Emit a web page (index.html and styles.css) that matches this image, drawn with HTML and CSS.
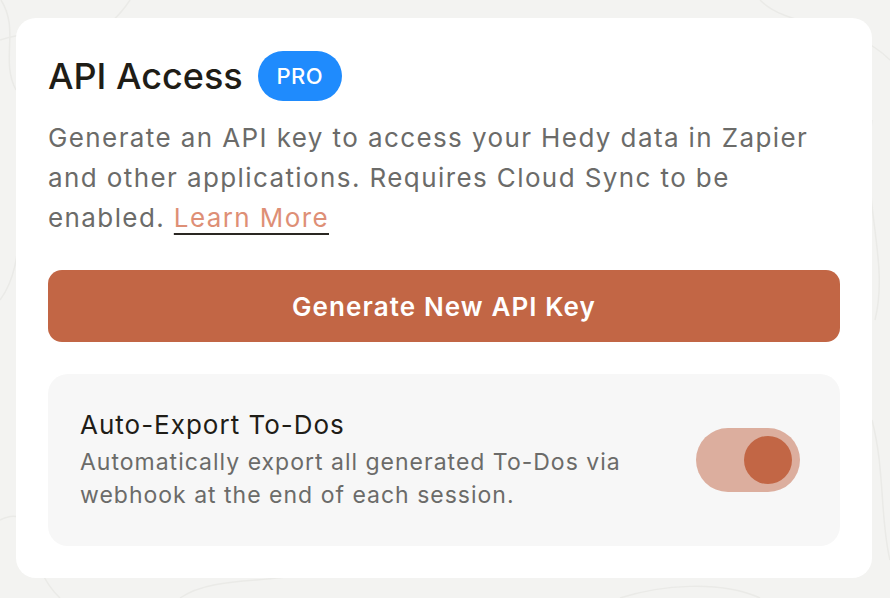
FILE: index.html
```html
<!DOCTYPE html>
<html lang="en">
<head>
<meta charset="utf-8">
<title>API Access</title>
<link rel="stylesheet" href="styles.css">
</head>
<body>
<svg class="backdrop" width="890" height="598" viewBox="0 0 890 598" aria-hidden="true">
  <path d="M0 40 C60 20 90 60 130 0" />
  <path d="M0 300 C30 260 10 200 40 150" />
  <path d="M0 520 C40 500 20 560 60 598" />
  <path d="M180 598 C220 570 300 590 330 560" />
  <path d="M620 598 C660 585 720 580 760 598" />
  <path d="M760 0 C790 30 850 20 890 60" />
  <path d="M872 120 C860 200 890 260 875 320" />
  <path d="M872 420 C885 470 880 520 890 560" />
  <path d="M1 0 C20 30 0 60 16 90" />
</svg>
<main class="card">
  <div class="title-row">
    <h1 class="title">API Access</h1>
    <span class="badge">PRO</span>
  </div>
  <p class="desc">Generate an API key to access your Hedy data in Zapier and other applications. Requires Cloud Sync to be enabled. <a class="link" href="#">Learn More</a></p>
  <button class="primary" type="button">Generate New API Key</button>
  <section class="panel">
    <div class="panel-text">
      <h2 class="panel-title">Auto-Export To-Dos</h2>
      <p class="panel-desc">Automatically export all generated To-Dos via webhook at the end of each session.</p>
    </div>
    <div class="toggle" role="switch" aria-checked="true"><span class="knob"></span></div>
  </section>
</main>
</body>
</html>
```
FILE: styles.css
```css
* { box-sizing: border-box; }
html, body { margin: 0; padding: 0; }
body {
  width: 890px;
  height: 598px;
  background: #f3f3f1;
  font-family: Inter, "Noto Sans", sans-serif;
  padding: 18px 18px 0 16px;
  position: relative;
  overflow: hidden;
}
.backdrop {
  position: absolute;
  left: 0;
  top: 0;
  fill: none;
  stroke: #eaeae7;
  stroke-width: 1.5;
}
.card {
  position: relative;
  width: 856px;
  height: 560px;
  background: #ffffff;
  border-radius: 20px;
  padding: 32px 32px 32px 32px;
  display: flex;
  flex-direction: column;
}
.title-row {
  display: flex;
  align-items: center;
  gap: 15px;
  height: 51px;
}
.title {
  margin: 0;
  font-size: 36px;
  font-weight: 500;
  color: #1f1d17;
  line-height: 1;
}
.badge {
  display: inline-flex;
  align-items: center;
  justify-content: center;
  width: 84px;
  height: 50px;
  border-radius: 25px;
  background: #1f8bfd;
  color: #fff;
  font-size: 22px;
  font-weight: 500;
  letter-spacing: 0.5px;
}
.desc {
  margin: 17px 0 0;
  font-size: 26px;
  line-height: 40px;
  color: #6b6b69;
  letter-spacing: 1.4px;
}
.link {
  color: #de8f76;
  text-decoration: underline;
  text-decoration-color: #2a2722;
  text-underline-offset: 6px;
  text-decoration-thickness: 2px;
}
.primary {
  margin-top: 32px;
  height: 72px;
  border: none;
  border-radius: 14px;
  background: #c26645;
  color: #fff;
  font-family: inherit;
  font-size: 26px;
  font-weight: 600;
  letter-spacing: 1.1px;
  width: 100%;
}
.panel {
  margin-top: 32px;
  height: 172px;
  background: #f7f7f7;
  border-radius: 20px;
  padding: 0 40px 0 32px;
  display: flex;
  align-items: center;
  justify-content: space-between;
}
.panel-text { width: 580px; }
.panel-title {
  margin: 0;
  font-size: 26px;
  font-weight: 400;
  color: #1f1d17;
  line-height: 34px;
  letter-spacing: 1px;
}
.panel-desc {
  margin: 4px 0 0;
  font-size: 23px;
  line-height: 33px;
  color: #6b6b69;
  letter-spacing: 1px;
}
.toggle {
  width: 104px;
  height: 64px;
  border-radius: 32px;
  background: #dcae9e;
  display: flex;
  align-items: center;
  justify-content: flex-end;
  padding-right: 8px;
}
.knob {
  width: 48px;
  height: 48px;
  border-radius: 50%;
  background: #c26645;
}
```
